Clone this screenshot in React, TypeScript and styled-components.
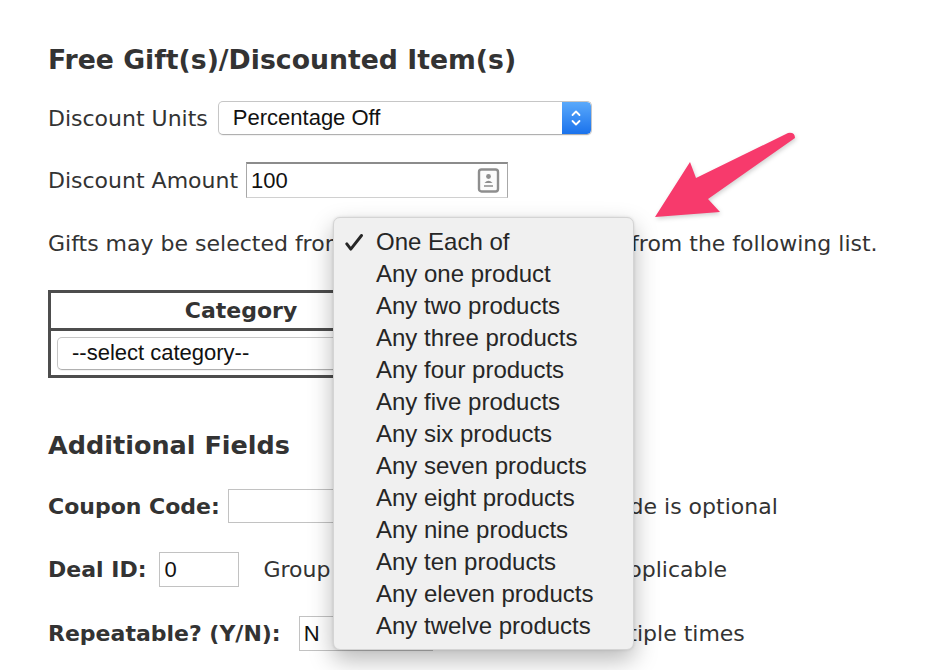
import React from "react";
import styled, { createGlobalStyle } from "styled-components";

const GlobalStyle = createGlobalStyle`
  html, body { margin: 0; padding: 0; background: #ffffff; }
  body {
    font-family: "DejaVu Sans", Verdana, sans-serif;
    color: #333333;
  }
`;

const Page = styled.div`
  position: relative;
  width: 934px;
  height: 670px;
  overflow: hidden;
  box-sizing: border-box;
  padding-left: 48px;
  display: flex;
  flex-direction: column;
  align-items: flex-start;
`;

const SectionTitle = styled.h2<{ $top: number; $size: number }>`
  margin: ${(p) => p.$top}px 0 0 0;
  height: 32px;
  line-height: 32px;
  font-size: ${(p) => p.$size}px;
  font-weight: bold;
  color: #333;
  white-space: nowrap;
`;

const FieldRow = styled.div<{ $top: number; $h: number }>`
  margin-top: ${(p) => p.$top}px;
  height: ${(p) => p.$h}px;
  display: flex;
  align-items: center;
  font-size: 22px;
  white-space: nowrap;
  color: #333;
`;

const Label = styled.span<{ $bold?: boolean; $gap?: number }>`
  font-weight: ${(p) => (p.$bold ? "bold" : "normal")};
  margin-right: ${(p) => p.$gap ?? 10}px;
`;

const Note = styled.span<{ $gap?: number }>`
  margin-left: ${(p) => p.$gap ?? 10}px;
`;

const MacSelect = styled.div<{ $width: number; $h?: number; $gap?: number }>`
  box-sizing: border-box;
  width: ${(p) => p.$width}px;
  height: ${(p) => p.$h ?? 34}px;
  margin-left: ${(p) => p.$gap ?? 0}px;
  display: flex;
  align-items: center;
  justify-content: space-between;
  border: 1px solid #c6c6c6;
  border-bottom-color: #b0b0b0;
  border-radius: 5px;
  background: #ffffff;
  box-shadow: 0 1px 1px rgba(0, 0, 0, 0.06);
  font-family: "Liberation Sans", Arial, sans-serif;
  font-size: 22px;
  color: #111;
  overflow: hidden;
`;

const SelectText = styled.span`
  padding-left: 14px;
`;

const Stepper = styled.div`
  width: 29px;
  height: 100%;
  display: flex;
  align-items: center;
  justify-content: center;
  background: linear-gradient(#5aa9fb, #1a72ec);
  border-radius: 0 4px 4px 0;
`;

const TextInput = styled.div<{ $width: number; $h?: number; $inset?: boolean; $gap?: number }>`
  box-sizing: border-box;
  width: ${(p) => p.$width}px;
  height: ${(p) => p.$h ?? 35}px;
  margin-left: ${(p) => p.$gap ?? 0}px;
  display: flex;
  align-items: center;
  justify-content: space-between;
  padding: 0 6px 0 4px;
  background: #fff;
  border: 1px solid #c2c2c2;
  ${(p) =>
    p.$inset &&
    `
    border-top: 2px solid #8c8c8c;
    border-left: 1px solid #a8a8a8;
    border-right: 1px solid #a8a8a8;
    border-bottom: 1px solid #d0d0d0;
  `}
  font-family: "Liberation Sans", Arial, sans-serif;
  font-size: 22px;
  color: #111;
`;

const CatTable = styled.table`
  margin-top: 30px;
  width: 386px;
  border-collapse: collapse;
  border: 3px solid #4d4d4d;
`;

const HeadCell = styled.th`
  height: 35px;
  padding: 0;
  font-size: 22px;
  font-weight: bold;
  color: #333;
  text-align: center;
  border-bottom: 3px solid #4d4d4d;
`;

const BodyCell = styled.td`
  height: 44px;
  padding: 0 6px;
`;

const PopupMenu = styled.ul`
  position: absolute;
  left: 333px;
  top: 217px;
  width: 301px;
  height: 433px;
  box-sizing: border-box;
  margin: 0;
  padding: 8px 0 0 0;
  list-style: none;
  background: #f0f0f0;
  border: 1px solid #d4d4d4;
  border-radius: 7px;
  box-shadow: 0 10px 24px rgba(0, 0, 0, 0.28), 0 0 3px rgba(0, 0, 0, 0.12);
`;

const MenuItem = styled.li`
  position: relative;
  height: 32px;
  line-height: 32px;
  padding-left: 42px;
  font-family: "Liberation Sans", Arial, sans-serif;
  font-size: 24px;
  color: #262626;
  white-space: nowrap;
`;

const CheckMark = styled.svg`
  position: absolute;
  left: 11px;
  top: 8px;
`;

const Arrow = styled.svg`
  position: absolute;
  left: 640px;
  top: 120px;
  filter: drop-shadow(1px 2px 2px rgba(0, 0, 0, 0.18));
`;

const items = [
  "One Each of",
  "Any one product",
  "Any two products",
  "Any three products",
  "Any four products",
  "Any five products",
  "Any six products",
  "Any seven products",
  "Any eight products",
  "Any nine products",
  "Any ten products",
  "Any eleven products",
  "Any twelve products",
];

export default function App() {
  return (
    <>
      <GlobalStyle />
      <Page>
        <SectionTitle $top={44} $size={26.7}>
          Free Gift(s)/Discounted Item(s)
        </SectionTitle>

        <FieldRow $top={25} $h={34}>
          <Label>Discount Units</Label>
          <MacSelect $width={374}>
            <SelectText>Percentage Off</SelectText>
            <Stepper>
              <svg width="14" height="22" viewBox="0 0 14 22">
                <path d="M3.5 8 L7 4.5 L10.5 8" fill="none" stroke="#fff" strokeWidth="1.8" strokeLinecap="round" strokeLinejoin="round" />
                <path d="M3.5 14 L7 17.5 L10.5 14" fill="none" stroke="#fff" strokeWidth="1.8" strokeLinecap="round" strokeLinejoin="round" />
              </svg>
            </Stepper>
          </MacSelect>
        </FieldRow>

        <FieldRow $top={27} $h={36}>
          <Label $gap={8}>Discount Amount</Label>
          <TextInput $width={262} $h={36} $inset>
            <span>100</span>
            <svg width="24" height="25" viewBox="0 0 24 25">
              <rect x="2" y="1.5" width="19" height="22" rx="2.5" fill="#fbfbfb" stroke="#8e8e8e" strokeWidth="2.4" />
              <circle cx="11.5" cy="8.5" r="2.4" fill="#8e8e8e" />
              <path d="M7.5 15 Q11.5 10.5 15.5 15 Z" fill="#8e8e8e" />
              <rect x="7" y="17" width="9" height="2" fill="#a8a8a8" />
            </svg>
          </TextInput>
        </FieldRow>

        <FieldRow $top={28} $h={34}>
          <span>Gifts may be selected from</span>
          <MacSelect $width={265} $gap={10} />
          <Note $gap={10}>from the following list.</Note>
        </FieldRow>

        <CatTable>
          <thead>
            <tr>
              <HeadCell>Category</HeadCell>
            </tr>
          </thead>
          <tbody>
            <tr>
              <BodyCell>
                <MacSelect $width={360} $h={33}>
                  <SelectText>--select category--</SelectText>
                </MacSelect>
              </BodyCell>
            </tr>
          </tbody>
        </CatTable>

        <SectionTitle $top={51} $size={25.5}>
          Additional Fields
        </SectionTitle>

        <FieldRow $top={28} $h={34}>
          <Label $bold $gap={8}>Coupon Code:</Label>
          <TextInput $width={273} $h={34} />
          <Note $gap={12}>Coupon code is optional</Note>
        </FieldRow>

        <FieldRow $top={29} $h={35}>
          <Label $bold $gap={13}>Deal ID:</Label>
          <TextInput $width={80} $h={35}>
            <span>0</span>
          </TextInput>
          <Note $gap={24}>Group</Note>
          <TextInput $width={243} $h={35} $gap={10} />
          <Note $gap={10}>if applicable</Note>
        </FieldRow>

        <FieldRow $top={29} $h={35}>
          <Label $bold $gap={18}>Repeatable? (Y/N):</Label>
          <TextInput $width={134} $h={35}>
            <span>N</span>
          </TextInput>
          <Note $gap={10}>Can be used multiple times</Note>
        </FieldRow>

        <PopupMenu>
          {items.map((it, i) => (
            <MenuItem key={it}>
              {i === 0 && (
                <CheckMark width="18" height="17" viewBox="0 0 18 17">
                  <path d="M1.8 9.8 L5.8 15.2 L16.5 1.5" fill="none" stroke="#262626" strokeWidth="2.9" strokeLinecap="round" strokeLinejoin="round" />
                </CheckMark>
              )}
              {it}
            </MenuItem>
          ))}
        </PopupMenu>

        <Arrow width="170" height="110" viewBox="640 120 170 110">
          <path
            d="M655 217 L690 162 L696 178 L788 133 Q795 132 795 138 L708 199 L720 212 Z"
            fill="#f73a6c"
          />
        </Arrow>
      </Page>
    </>
  );
}
